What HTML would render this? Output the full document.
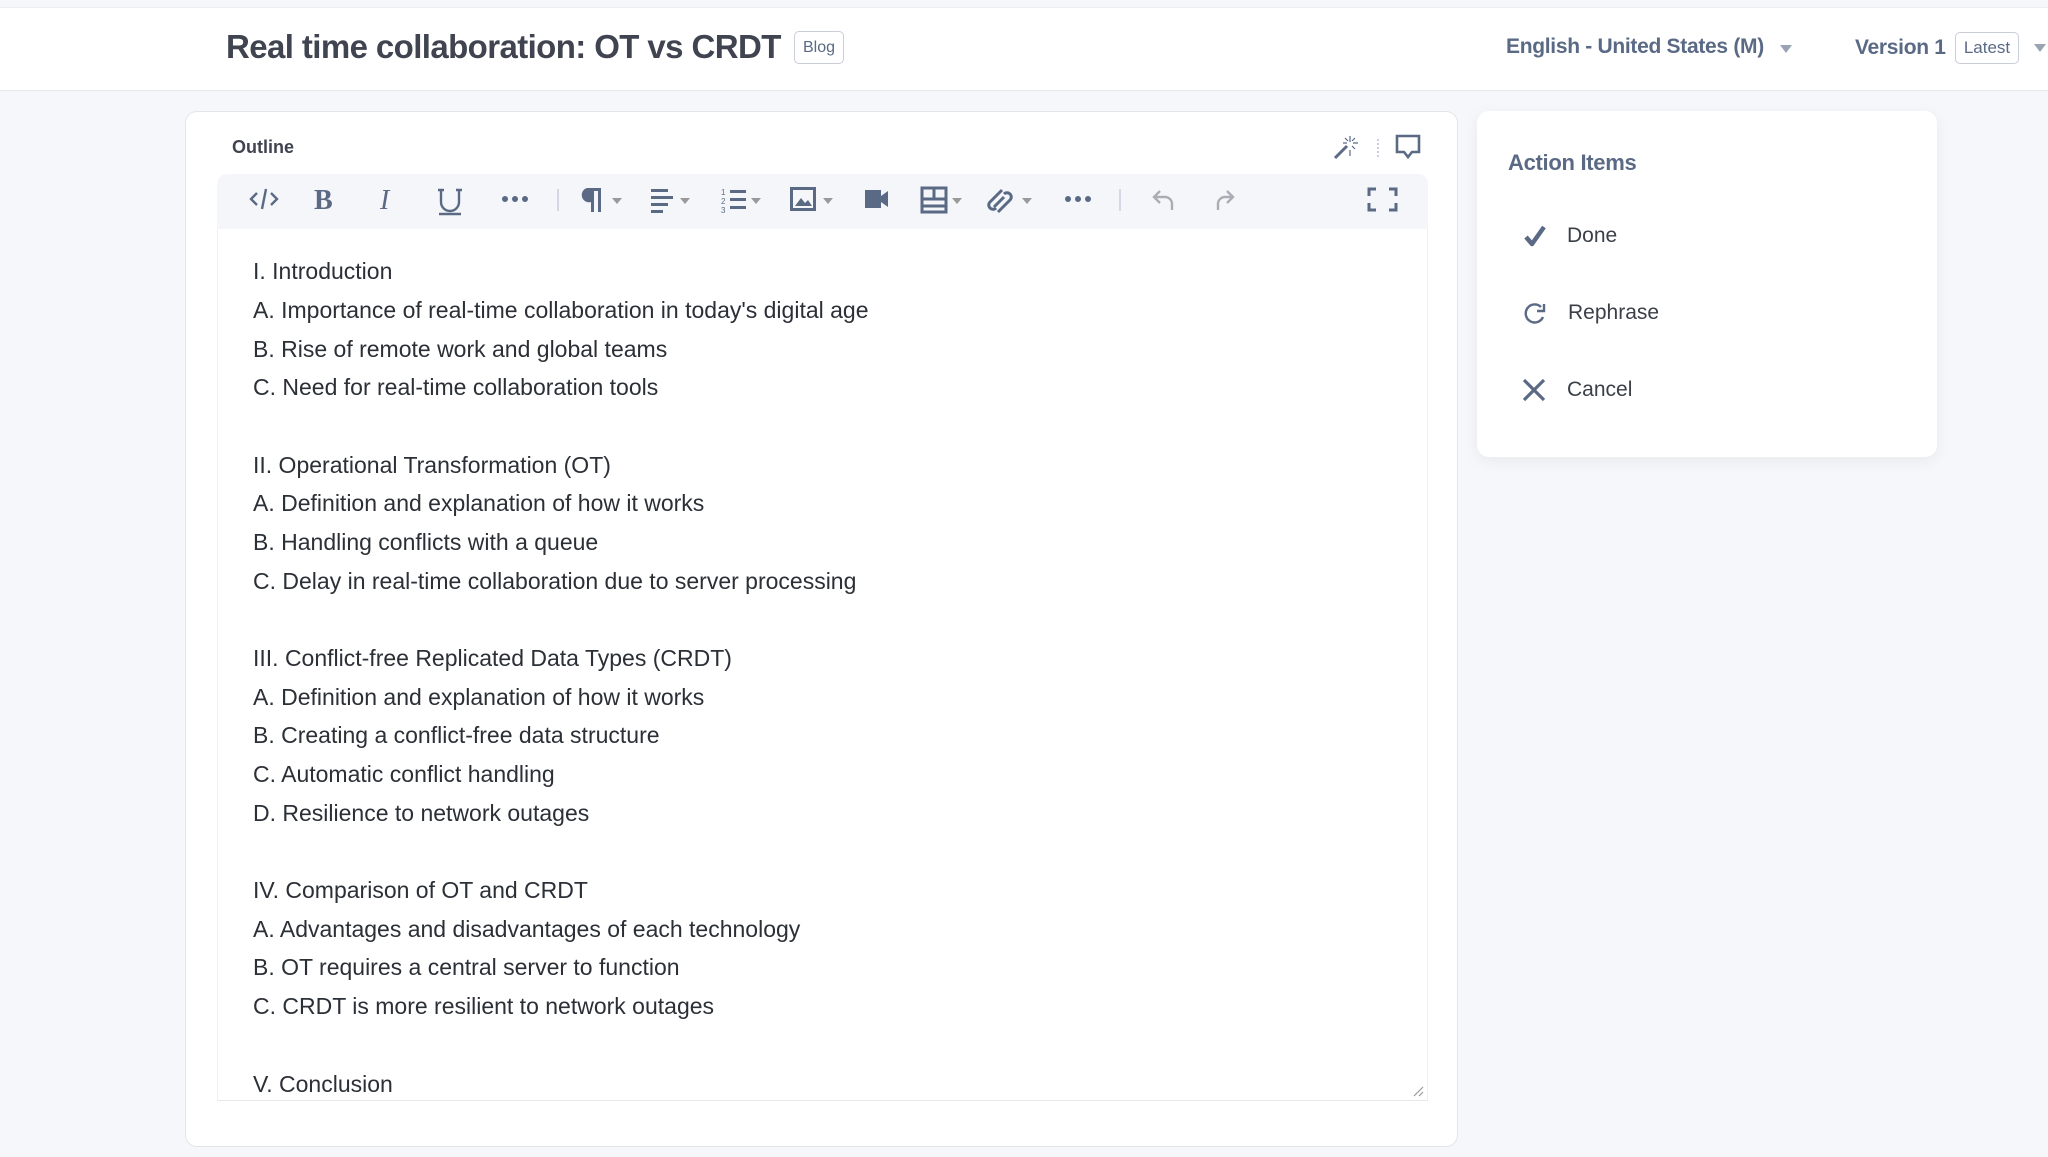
<!DOCTYPE html>
<html><head><meta charset="utf-8"><style>
*{margin:0;padding:0;box-sizing:border-box}
body{width:2048px;height:1157px;background:#f6f7fa;font-family:"Liberation Sans",sans-serif;position:relative;overflow:hidden}
.a{position:absolute}
#hdr{left:0;top:7px;width:2048px;height:84px;background:#fff;border-top:1px solid #eceef2;border-bottom:1px solid #e6e8ec}
.title{left:226px;top:28px;font-size:33px;font-weight:bold;color:#3f4450;letter-spacing:-0.6px}
.badge{border:1.5px solid #c9ced8;border-radius:5px;color:#5a6a85;font-size:16px;display:flex;align-items:center;justify-content:center}
.hl{font-size:21px;font-weight:bold;color:#5a6a85;letter-spacing:-0.3px}
.tri{width:0;height:0;border-left:6px solid transparent;border-right:6px solid transparent;border-top:8px solid #9aa3b2}
#card{left:185px;top:111px;width:1273px;height:1036px;background:#fff;border:1px solid #e2e5ea;border-radius:12px}
#tb{left:217px;top:174px;width:1211px;height:55px;background:#f5f6f9;border-radius:10px 10px 0 0}
#ed{left:217px;top:229px;width:1211px;height:872px;background:#fff;border-left:1px solid #eef0f3;border-right:1px solid #eef0f3;border-bottom:1px solid #e6e8ec}
.ln{left:253px;font-size:23px;color:#2b2f36;line-height:24px}
#panel{left:1477px;top:111px;width:460px;height:346px;background:#fff;border-radius:12px;box-shadow:0 4px 16px rgba(0,0,0,0.06)}
.it{font-size:21px;color:#3a3f48}
svg{position:absolute;overflow:visible}
</style></head><body>
<div class="a" id="hdr"></div>
<div class="a title">Real time collaboration: OT vs CRDT</div>
<div class="a badge" style="left:794px;top:31px;width:50px;height:33px">Blog</div>
<div class="a hl" style="left:1506px;top:35px">English - United States (M)</div>
<div class="a tri" style="left:1780px;top:45px"></div>
<div class="a hl" style="left:1855px;top:36px">Version 1</div>
<div class="a badge" style="left:1955px;top:32px;width:64px;height:32px;font-size:17px">Latest</div>
<div class="a tri" style="left:2034px;top:44px"></div>

<div class="a" id="card"></div>
<div class="a" style="left:232px;top:137px;font-size:18px;font-weight:bold;color:#3f4450">Outline</div>
<svg style="left:1333px;top:134px" width="26" height="26" viewBox="0 0 26 26"><path d="M2 24L14 12" stroke="#5a6a85" stroke-width="3"/><path d="M17 2v6M17 16v6M10 9h4M20 9h5M12 4l3 3M22 4l-3 3M22 15l-3-3" stroke="#5a6a85" stroke-width="1.2"/></svg>
<div class="a" style="left:1377px;top:139px;height:18px;border-left:2px dotted #ccd"></div>
<svg style="left:1395px;top:134px" width="26" height="26" viewBox="0 0 26 26"><path d="M2 2h22v16h-7l-4 5-4-5H2z" fill="none" stroke="#5a6a85" stroke-width="2.6"/></svg>

<div class="a" id="tb"></div>
<svg style="left:0;top:0" width="2048" height="260">
<g fill="none" stroke="#5a6a85" stroke-width="2.4">
<path d="M257 193l-6 6 6 6M271 193l6 6-6 6M266 189l-4 20"/>
<path d="M441 190v12a9 9 0 0 0 18 0v-12M438 190h6M456 190h6M439 214h22" />
</g>
<g fill="#5a6a85">
<text x="314" y="209" font-family="Liberation Serif" font-weight="bold" font-size="28">B</text>
<text x="380" y="209" font-family="Liberation Serif" font-style="italic" font-size="28">I</text>
<circle cx="505" cy="199" r="3"/><circle cx="515" cy="199" r="3"/><circle cx="525" cy="199" r="3"/>
<circle cx="1068" cy="199" r="3"/><circle cx="1078" cy="199" r="3"/><circle cx="1088" cy="199" r="3"/>
<path d="M587 188h14v24h-3v-21h-4v21h-3v-10a7 7 0 0 1 -4-14z"/>
<rect x="651" y="189" width="17" height="3"/><rect x="651" y="196" width="22" height="3"/><rect x="651" y="203" width="17" height="3"/><rect x="651" y="210" width="12" height="3"/>
<text x="721" y="195" font-size="8">1</text><text x="721" y="204" font-size="8">2</text><text x="721" y="213" font-size="8">3</text>
<rect x="730" y="190" width="16" height="3"/><rect x="730" y="198" width="16" height="3"/><rect x="730" y="206" width="16" height="3"/>
<path d="M790 187h26v24h-26zM793 190v18h20v-18z"/><path d="M795 206l6-8 4 5 3-3 4 6z"/>
<path d="M865 190h16v18h-16zM881 196l7-5v16l-7-5z"/>
<path d="M922 188h24v24h-24z" fill="none" stroke="#5a6a85" stroke-width="3"/><path d="M922 199h24M922 206h24M934 188v11" stroke="#5a6a85" stroke-width="3"/>
<path d="M612 198h10l-5 6zM680 198h10l-5 6zM751 198h10l-5 6zM823 198h10l-5 6zM952 198h10l-5 6zM1022 198h10l-5 6z" fill="#999"/>
</g>
<g fill="none" stroke="#5a6a85" stroke-width="3">
<path d="M1002 190l-12 12a4 4 0 0 0 6 6M1004 197l-10 10M998 212l12-12a4 4 0 0 0-6-6"/>
<path d="M1369 196v-7h7M1389 189h7v7M1396 203v7h-7M1376 210h-7v-7"/>
</g>
<path d="M558 189v22M1120 189v22" stroke="#ccd" stroke-width="1.5"/>
<g fill="none" stroke="#a9aeb6" stroke-width="2.4">
<path d="M1172 210v-6a7 7 0 0 0-7-7h-11M1160 191l-6 6 6 6"/>
<path d="M1218 210v-6a7 7 0 0 1 7-7h8M1227 191l6 6-6 6"/>
</g>
</svg>

<div class="a" id="ed"></div>
<svg style="left:1412px;top:1085px" width="12" height="12"><path d="M2 11L11 2M7 11l4-4" stroke="#999" stroke-width="1.2"/></svg>
<div class="a ln" style="top:259px">I. Introduction</div>
<div class="a ln" style="top:298px">A. Importance of real-time collaboration in today's digital age</div>
<div class="a ln" style="top:337px">B. Rise of remote work and global teams</div>
<div class="a ln" style="top:375px">C. Need for real-time collaboration tools</div>
<div class="a ln" style="top:453px">II. Operational Transformation (OT)</div>
<div class="a ln" style="top:491px">A. Definition and explanation of how it works</div>
<div class="a ln" style="top:530px">B. Handling conflicts with a queue</div>
<div class="a ln" style="top:569px">C. Delay in real-time collaboration due to server processing</div>
<div class="a ln" style="top:646px">III. Conflict-free Replicated Data Types (CRDT)</div>
<div class="a ln" style="top:685px">A. Definition and explanation of how it works</div>
<div class="a ln" style="top:723px">B. Creating a conflict-free data structure</div>
<div class="a ln" style="top:762px">C. Automatic conflict handling</div>
<div class="a ln" style="top:801px">D. Resilience to network outages</div>
<div class="a ln" style="top:878px">IV. Comparison of OT and CRDT</div>
<div class="a ln" style="top:917px">A. Advantages and disadvantages of each technology</div>
<div class="a ln" style="top:955px">B. OT requires a central server to function</div>
<div class="a ln" style="top:994px">C. CRDT is more resilient to network outages</div>
<div class="a ln" style="top:1072px">V. Conclusion</div>

<div class="a" id="panel"></div>
<div class="a" style="left:1508px;top:150px;font-size:22px;font-weight:bold;color:#5a6a85;letter-spacing:-0.3px">Action Items</div>
<svg style="left:1523px;top:224px" width="24" height="24"><path d="M3 13l6 7L21 3" fill="none" stroke="#5a6a85" stroke-width="4.5" stroke-linejoin="round"/></svg>
<div class="a it" style="left:1567px;top:224px">Done</div>
<svg style="left:1523px;top:301px" width="26" height="26"><path d="M20 16A9 9 0 1 1 18 6" fill="none" stroke="#5a6a85" stroke-width="2.4"/><path d="M21 3v7h-7" fill="none" stroke="#5a6a85" stroke-width="2.4"/></svg>
<div class="a it" style="left:1568px;top:301px">Rephrase</div>
<svg style="left:1522px;top:378px" width="24" height="24"><path d="M2 2l20 20M22 2L2 22" stroke="#5a6a85" stroke-width="3.2"/></svg>
<div class="a it" style="left:1567px;top:378px">Cancel</div>
</body></html>
